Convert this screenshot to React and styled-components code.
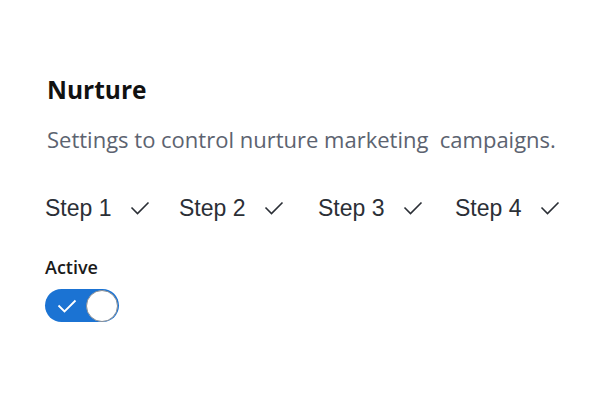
import React, { useState } from "react";
import styled, { createGlobalStyle } from "styled-components";

const Global = createGlobalStyle`
  body {
    margin: 0;
    background: #ffffff;
  }
`;

const Page = styled.div`
  width: 600px;
  height: 400px;
  box-sizing: border-box;
  padding: 74px 0 0 45px;
  display: flex;
  flex-direction: column;
`;

const Title = styled.h2`
  margin: 0 0 0 2px;
  font-family: "Open Sans", sans-serif;
  font-weight: 700;
  font-size: 24.5px;
  line-height: 32px;
  color: #111111;
`;

const Description = styled.p`
  margin: 18px 0 0 2px;
  font-family: "Open Sans", sans-serif;
  font-size: 22px;
  line-height: 30px;
  color: #5c6370;
  white-space: pre;
`;

const Steps = styled.div`
  display: flex;
  margin-top: 40px;
`;

const Step = styled.div`
  display: flex;
  align-items: center;
  gap: 18px;
  width: ${(p) => p.$w}px;
  font-family: "Liberation Sans", Arial, sans-serif;
  font-size: 23px;
  line-height: 28px;
  color: #2b2f36;
`;

const Label = styled.div`
  margin-top: 33px;
  font-family: "Open Sans", sans-serif;
  font-weight: 600;
  font-size: 18px;
  line-height: 24px;
  color: #1a1a1a;
`;

const Switch = styled.button`
  margin-top: 10px;
  width: 74px;
  height: 33px;
  padding: 0 1px 0 0;
  border: none;
  border-radius: 17px;
  background: ${(p) => (p.$on ? "#1b73d3" : "#c8ccd2")};
  display: flex;
  align-items: center;
  justify-content: ${(p) => (p.$on ? "space-between" : "flex-start")};
  cursor: pointer;
`;

const Tick = styled.svg`
  margin-left: 12px;
`;

const Knob = styled.span`
  width: 32px;
  height: 32px;
  box-sizing: border-box;
  border-radius: 50%;
  background: #ffffff;
  border: 1.5px solid #8a8f96;
`;

const Check = () => (
  <svg width="20" height="14" viewBox="0 0 20 14">
    <path d="M1.5 6.5 L7.5 12.5 L18.5 1.5" fill="none" stroke="#2b2f36" strokeWidth="1.6" />
  </svg>
);

const steps = [
  { name: "Step 1", w: 134 },
  { name: "Step 2", w: 139 },
  { name: "Step 3", w: 137 },
  { name: "Step 4", w: 120 },
];

export default function App() {
  const [on, setOn] = useState(true);
  return (
    <>
      <Global />
      <Page>
        <Title>Nurture</Title>
        <Description>{"Settings to control nurture marketing  campaigns."}</Description>
        <Steps>
          {steps.map((s) => (
            <Step key={s.name} $w={s.w}>
              {s.name}
              <Check />
            </Step>
          ))}
        </Steps>
        <Label>Active</Label>
        <Switch $on={on} onClick={() => setOn(!on)}>
          {on && (
            <Tick width="20" height="14" viewBox="0 0 20 14">
              <path d="M1.5 6.5 L7.5 12.5 L18.5 1.5" fill="none" stroke="#ffffff" strokeWidth="1.8" />
            </Tick>
          )}
          <Knob />
        </Switch>
      </Page>
    </>
  );
}
